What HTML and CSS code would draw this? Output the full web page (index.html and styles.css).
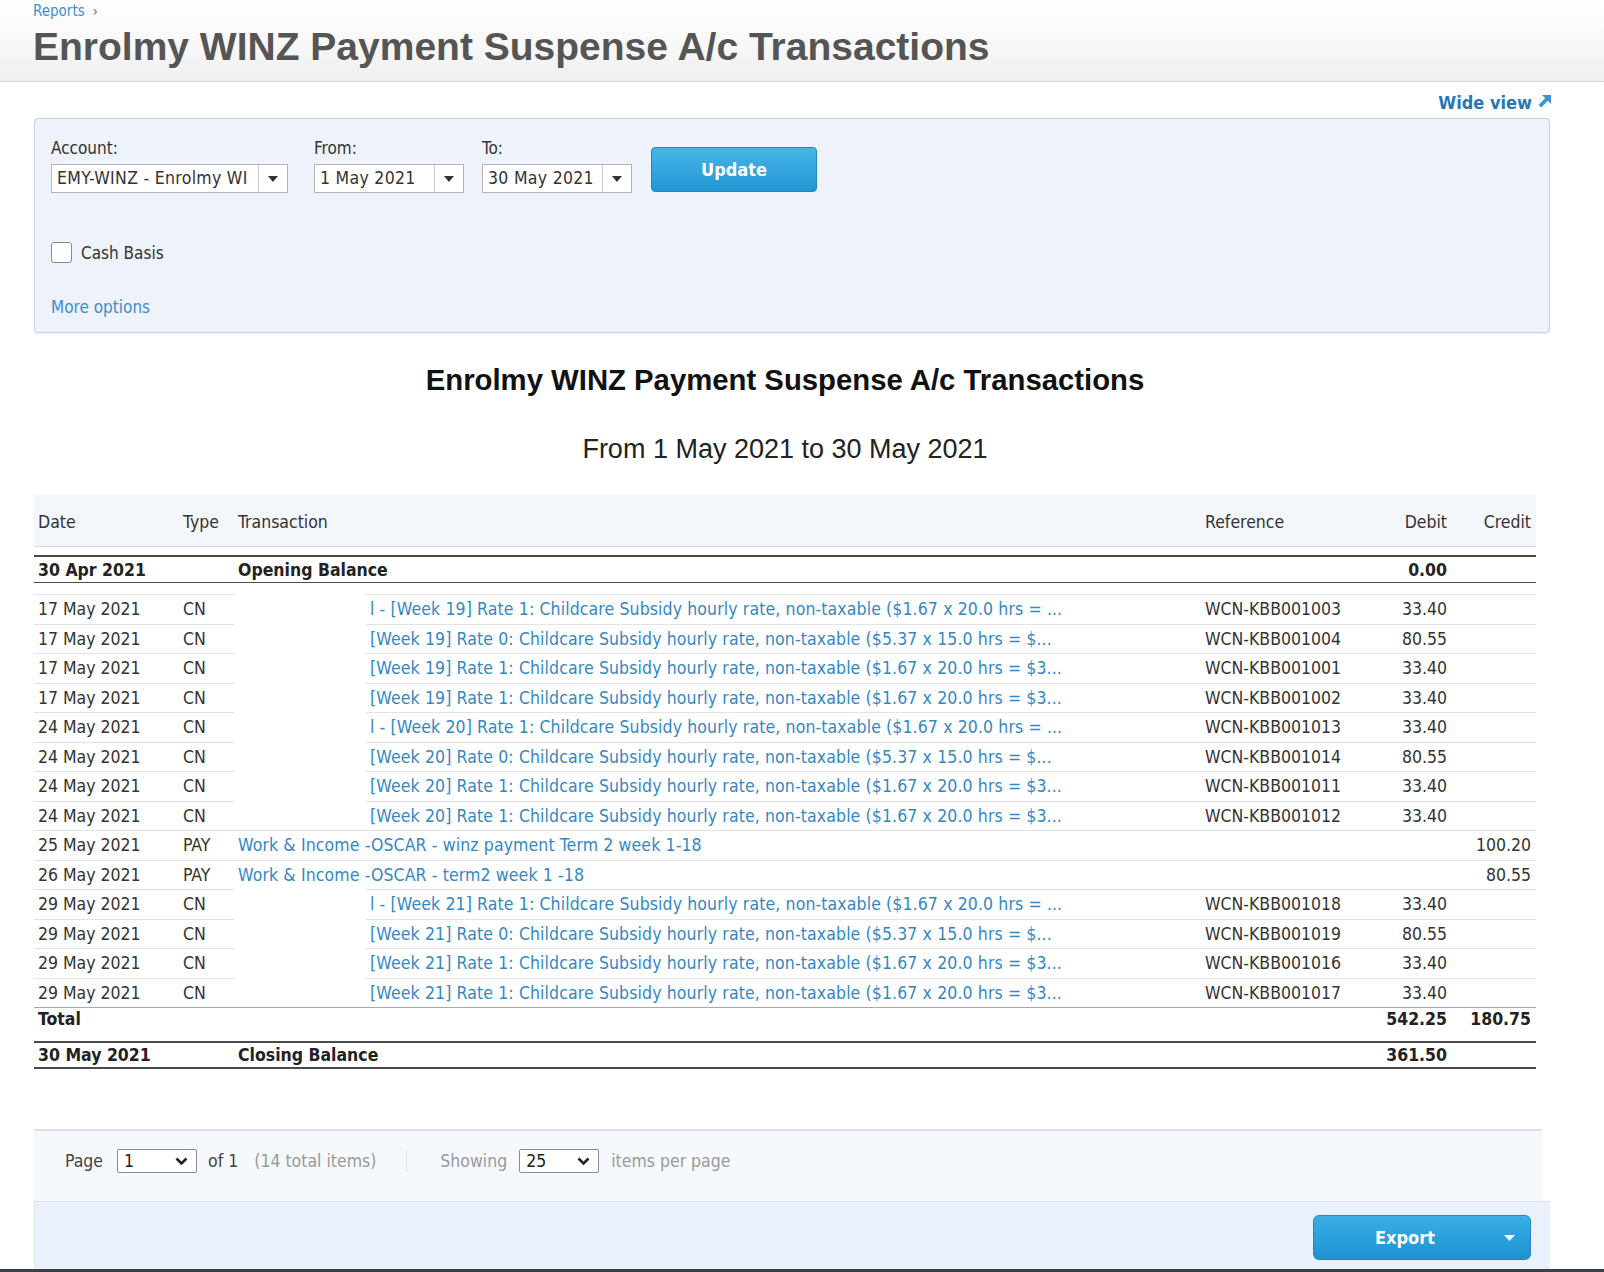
FILE: index.html
```html
<!DOCTYPE html>
<html lang="en">
<head>
    <meta charset="UTF-8">
    <title>Enrolmy WINZ Payment Suspense A/c Transactions</title>
    <link rel="stylesheet" href="styles.css">
</head>
<body>

<header class="page-head">
    <div class="crumbs"><a href="#">Reports</a><span class="crumb-sep">&rsaquo;</span></div>
    <h1 class="page-title">Enrolmy WINZ Payment Suspense A/c Transactions</h1>
</header>

<main class="content">
    <div class="wide-row">
        <a class="wide-link" href="#">Wide view
            <svg width="16" height="16" viewBox="0 0 16 16"><path d="M6 1h9v9l-3.2-3.2L5.2 13.4 2.6 10.8 9.2 4.2z" fill="#3f93d3"/></svg>
        </a>
    </div>

    <section class="filters">
        <div class="field-row">
            <div class="field field-account">
                <div class="field-label">Account:</div>
                <div class="combo">
                    <span class="combo-text">EMY-WINZ - Enrolmy WI</span>
                    <span class="combo-btn"><svg width="10" height="6" viewBox="0 0 10 6"><path d="M0 0h10L5 6z" fill="#333"/></svg></span>
                </div>
            </div>
            <div class="field field-from">
                <div class="field-label">From:</div>
                <div class="combo">
                    <span class="combo-text">1 May 2021</span>
                    <span class="combo-btn"><svg width="10" height="6" viewBox="0 0 10 6"><path d="M0 0h10L5 6z" fill="#333"/></svg></span>
                </div>
            </div>
            <div class="field field-to">
                <div class="field-label">To:</div>
                <div class="combo">
                    <span class="combo-text">30 May 2021</span>
                    <span class="combo-btn"><svg width="10" height="6" viewBox="0 0 10 6"><path d="M0 0h10L5 6z" fill="#333"/></svg></span>
                </div>
            </div>
            <button class="btn-update">Update</button>
        </div>
        <label class="check-row"><input type="checkbox"> Cash Basis</label>
        <a class="more-link" href="#">More options</a>
    </section>

    <h2 class="report-title">Enrolmy WINZ Payment Suspense A/c Transactions</h2>
    <p class="report-sub">From 1 May 2021 to 30 May 2021</p>

    <table class="ledger">
        <colgroup>
            <col style="width:145px">
            <col style="width:55px">
            <col style="width:132px">
            <col style="width:835px">
            <col style="width:169px">
            <col style="width:82px">
            <col style="width:84px">
        </colgroup>
        <thead>
            <tr>
                <th>Date</th>
                <th>Type</th>
                <th colspan="2">Transaction</th>
                <th>Reference</th>
                <th class="num">Debit</th>
                <th class="num">Credit</th>
            </tr>
        </thead>
        <tbody>
            <tr class="gap"><td colspan="7"></td></tr>
            <tr class="opening">
                <td>30 Apr 2021</td>
                <td></td>
                <td colspan="2">Opening Balance</td>
                <td></td>
                <td class="num">0.00</td>
                <td></td>
            </tr>
            <tr class="gap gap-lg"><td colspan="7"></td></tr>

            <tr class="row">
                <td>17 May 2021</td><td>CN</td><td class="mask"></td>
                <td><a href="#">l - [Week 19] Rate 1: Childcare Subsidy hourly rate, non-taxable ($1.67 x 20.0 hrs = ...</a></td>
                <td>WCN-KBB001003</td><td class="num">33.40</td><td></td>
            </tr>
            <tr class="row">
                <td>17 May 2021</td><td>CN</td><td class="mask"></td>
                <td><a href="#">[Week 19] Rate 0: Childcare Subsidy hourly rate, non-taxable ($5.37 x 15.0 hrs = $...</a></td>
                <td>WCN-KBB001004</td><td class="num">80.55</td><td></td>
            </tr>
            <tr class="row">
                <td>17 May 2021</td><td>CN</td><td class="mask"></td>
                <td><a href="#">[Week 19] Rate 1: Childcare Subsidy hourly rate, non-taxable ($1.67 x 20.0 hrs = $3...</a></td>
                <td>WCN-KBB001001</td><td class="num">33.40</td><td></td>
            </tr>
            <tr class="row">
                <td>17 May 2021</td><td>CN</td><td class="mask"></td>
                <td><a href="#">[Week 19] Rate 1: Childcare Subsidy hourly rate, non-taxable ($1.67 x 20.0 hrs = $3...</a></td>
                <td>WCN-KBB001002</td><td class="num">33.40</td><td></td>
            </tr>
            <tr class="row">
                <td>24 May 2021</td><td>CN</td><td class="mask"></td>
                <td><a href="#">l - [Week 20] Rate 1: Childcare Subsidy hourly rate, non-taxable ($1.67 x 20.0 hrs = ...</a></td>
                <td>WCN-KBB001013</td><td class="num">33.40</td><td></td>
            </tr>
            <tr class="row">
                <td>24 May 2021</td><td>CN</td><td class="mask"></td>
                <td><a href="#">[Week 20] Rate 0: Childcare Subsidy hourly rate, non-taxable ($5.37 x 15.0 hrs = $...</a></td>
                <td>WCN-KBB001014</td><td class="num">80.55</td><td></td>
            </tr>
            <tr class="row">
                <td>24 May 2021</td><td>CN</td><td class="mask"></td>
                <td><a href="#">[Week 20] Rate 1: Childcare Subsidy hourly rate, non-taxable ($1.67 x 20.0 hrs = $3...</a></td>
                <td>WCN-KBB001011</td><td class="num">33.40</td><td></td>
            </tr>
            <tr class="row">
                <td>24 May 2021</td><td>CN</td><td class="mask"></td>
                <td><a href="#">[Week 20] Rate 1: Childcare Subsidy hourly rate, non-taxable ($1.67 x 20.0 hrs = $3...</a></td>
                <td>WCN-KBB001012</td><td class="num">33.40</td><td></td>
            </tr>
            <tr class="row">
                <td>25 May 2021</td><td>PAY</td>
                <td colspan="2"><a href="#">Work &amp; Income -OSCAR - winz payment Term 2 week 1-18</a></td>
                <td></td><td></td><td class="num">100.20</td>
            </tr>
            <tr class="row">
                <td>26 May 2021</td><td>PAY</td>
                <td colspan="2"><a href="#">Work &amp; Income -OSCAR - term2 week 1 -18</a></td>
                <td></td><td></td><td class="num">80.55</td>
            </tr>
            <tr class="row">
                <td>29 May 2021</td><td>CN</td><td class="mask"></td>
                <td><a href="#">l - [Week 21] Rate 1: Childcare Subsidy hourly rate, non-taxable ($1.67 x 20.0 hrs = ...</a></td>
                <td>WCN-KBB001018</td><td class="num">33.40</td><td></td>
            </tr>
            <tr class="row">
                <td>29 May 2021</td><td>CN</td><td class="mask"></td>
                <td><a href="#">[Week 21] Rate 0: Childcare Subsidy hourly rate, non-taxable ($5.37 x 15.0 hrs = $...</a></td>
                <td>WCN-KBB001019</td><td class="num">80.55</td><td></td>
            </tr>
            <tr class="row">
                <td>29 May 2021</td><td>CN</td><td class="mask"></td>
                <td><a href="#">[Week 21] Rate 1: Childcare Subsidy hourly rate, non-taxable ($1.67 x 20.0 hrs = $3...</a></td>
                <td>WCN-KBB001016</td><td class="num">33.40</td><td></td>
            </tr>
            <tr class="row">
                <td>29 May 2021</td><td>CN</td><td class="mask"></td>
                <td><a href="#">[Week 21] Rate 1: Childcare Subsidy hourly rate, non-taxable ($1.67 x 20.0 hrs = $3...</a></td>
                <td>WCN-KBB001017</td><td class="num">33.40</td><td></td>
            </tr>

            <tr class="total">
                <td>Total</td><td></td><td colspan="2"></td><td></td>
                <td class="num">542.25</td><td class="num">180.75</td>
            </tr>
            <tr class="closing">
                <td>30 May 2021</td><td></td>
                <td colspan="2">Closing Balance</td>
                <td></td><td class="num">361.50</td><td></td>
            </tr>
        </tbody>
    </table>

    <div class="pager">
        <span>Page</span>
        <span class="pg-select pg-page"><span>1</span><svg width="13" height="9" viewBox="0 0 13 9"><path d="M1.5 1.5l5 5 5-5" fill="none" stroke="#222" stroke-width="2.6"/></svg></span>
        <span class="pg-of">of 1</span>
        <span class="muted pg-total">(14 total items)</span>
        <span class="pg-sep"></span>
        <span class="muted">Showing</span>
        <span class="pg-select pg-size"><span>25</span><svg width="13" height="9" viewBox="0 0 13 9"><path d="M1.5 1.5l5 5 5-5" fill="none" stroke="#222" stroke-width="2.6"/></svg></span>
        <span class="muted pg-per">items per page</span>
    </div>

    <div class="actions">
        <button class="btn-export">
            <span class="btn-label">Export</span>
            <span class="btn-caret"><svg width="11" height="6" viewBox="0 0 11 6"><path d="M0 0h11L5.5 6z" fill="#fff"/></svg></span>
        </button>
    </div>
</main>

<div class="taskbar"></div>

</body>
</html>
```

FILE: styles.css
```css
    body {
        margin: 0;
        height: 1272px;
        overflow: hidden;
        display: flex;
        flex-direction: column;
        background-color: #fff;
        color: #333;
        font-family: "DejaVu Sans Condensed", "DejaVu Sans", sans-serif;
        font-size: 17px;
    }
    a {
        color: #3388c3;
        text-decoration: none;
    }

    .page-head {
        flex: none;
        height: 81px;
        padding: 0 33px;
        border-bottom: 1px solid #dadada;
        background: linear-gradient(#ffffff 0%, #f8f8f8 55%, #eeeeee 100%);
    }
    .crumbs {
        padding-top: 2px;
        line-height: 18px;
        font-size: 15px;
    }
    .crumbs a {
        color: #3d8fcb;
    }
    .crumb-sep {
        margin-left: 8px;
        color: #666;
        font-size: 14px;
    }
    .page-title {
        margin: 5px 0 0 0;
        font: bold 39px/44px "Liberation Sans", Arial, sans-serif;
        color: #555;
    }

    .content {
        flex: 1;
        display: flex;
        flex-direction: column;
        width: 1516px;
        padding-left: 34px;
    }
    .wide-row {
        height: 32px;
        padding-top: 4px;
        margin-right: -2px;
        display: flex;
        justify-content: flex-end;
        align-items: center;
    }
    .wide-link {
        display: flex;
        align-items: center;
        gap: 4px;
        font-weight: bold;
        font-size: 18px;
        color: #2677b4;
    }

    .filters {
        height: 215px;
        box-sizing: border-box;
        padding: 19px 16px 15px 16px;
        border: 1px solid #c6d0dd;
        border-radius: 4px;
        background-color: #edf2fb;
        box-shadow: 0 1px 2px rgba(0, 0, 0, 0.08);
    }
    .field-row {
        display: flex;
        align-items: flex-end;
    }
    .field-label {
        line-height: 20px;
        margin-bottom: 6px;
    }
    .field-account {
        width: 237px;
        margin-right: 26px;
    }
    .field-from {
        width: 150px;
        margin-right: 18px;
    }
    .field-to {
        width: 150px;
    }
    .combo {
        display: flex;
        height: 29px;
        box-sizing: border-box;
        border: 1px solid #b3b3b3;
        background-color: #fff;
    }
    .combo-text {
        flex: 1;
        padding-left: 5px;
        line-height: 27px;
        font-size: 17.5px;
        letter-spacing: 0.3px;
        white-space: nowrap;
        overflow: hidden;
    }
    .combo-btn {
        width: 28px;
        border-left: 1px solid #cfcfcf;
        display: flex;
        align-items: center;
        justify-content: center;
    }
    .btn-update {
        width: 166px;
        height: 45px;
        margin: 0 0 1px 19px;
        border: 1px solid #2288c2;
        border-radius: 4px;
        background: linear-gradient(#48b5e7, #2196d3);
        color: #fff;
        font-family: inherit;
        font-size: 18px;
        font-weight: bold;
        cursor: pointer;
    }
    .check-row {
        display: flex;
        align-items: center;
        gap: 9px;
        height: 21px;
        margin-top: 49px;
    }
    .check-row input {
        -webkit-appearance: none;
        appearance: none;
        width: 21px;
        height: 21px;
        margin: 0;
        border: 1px solid #8a8a8a;
        border-radius: 3px;
        background-color: #fff;
    }
    .more-link {
        display: block;
        width: max-content;
        margin-top: 34px;
        line-height: 20px;
        color: #3d8fcb;
    }

    .report-title {
        width: 1502px;
        margin: 29px 0 0 0;
        text-align: center;
        font: bold 29.3px/36px "Liberation Sans", Arial, sans-serif;
        color: #111;
    }
    .report-sub {
        width: 1502px;
        margin: 35px 0 0 0;
        text-align: center;
        font: 27px/32px "Liberation Sans", Arial, sans-serif;
        color: #222;
    }

    .ledger {
        width: 1502px;
        margin-top: 30px;
        table-layout: fixed;
        border-collapse: separate;
        border-spacing: 0;
        font-size: 17.5px;
    }
    .ledger th,
    .ledger td {
        box-sizing: border-box;
        padding: 0 4px;
        text-align: left;
        font-weight: normal;
        white-space: nowrap;
        overflow: hidden;
    }
    .ledger a {
        letter-spacing: 0.12px;
    }
    .ledger .num {
        text-align: right;
        padding-right: 5px;
    }
    .ledger thead th {
        height: 52px;
        padding-top: 2px;
        background-color: #f3f6fb;
        border-bottom: 1px solid #d3d9e2;
    }
    .ledger .gap td {
        height: 8px;
        padding: 0;
        font-size: 0;
    }
    .ledger .gap-lg td {
        height: 11px;
    }
    .ledger .opening td {
        height: 28px;
        border-top: 2px solid #4a4a4a;
        border-bottom: 1px solid #4a4a4a;
        font-weight: bold;
        color: #222;
    }
    .ledger .row td {
        height: 29.5px;
        border-top: 1px solid #e3e3e3;
    }
    .ledger .row td.mask {
        border-top-color: #fff;
    }
    .ledger .total td {
        height: 34px;
        vertical-align: top;
        line-height: 22px;
        border-top: 1px solid #a8a8a8;
        font-weight: bold;
        color: #222;
    }
    .ledger .closing td {
        height: 28px;
        border-top: 2px solid #4a4a4a;
        border-bottom: 2px solid #4a4a4a;
        font-weight: bold;
        color: #222;
    }

    .pager {
        width: 1508px;
        height: 72px;
        box-sizing: border-box;
        margin-top: 60px;
        padding: 18px 0 0 31px;
        display: flex;
        align-items: flex-start;
        line-height: 24px;
        font-size: 17.5px;
        border-top: 2px solid #dde2ea;
        background-color: #f5f8fd;
        color: #444;
    }
    .pg-select {
        width: 80px;
        height: 24px;
        box-sizing: border-box;
        padding: 0 8px 0 6px;
        display: flex;
        align-items: center;
        justify-content: space-between;
        border: 1px solid #8c8c8c;
        border-radius: 2px;
        background-color: #fff;
        color: #222;
    }
    .pg-page {
        margin-left: 14px;
    }
    .pg-of {
        margin-left: 11px;
    }
    .pg-total {
        margin-left: 16px;
    }
    .pg-sep {
        width: 1px;
        height: 22px;
        margin: 1px 0 0 30px;
        background-color: #dde3ec;
    }
    .muted {
        color: #9a9a9a;
    }
    .pg-sep + .muted {
        margin-left: 33px;
    }
    .pg-size {
        margin-left: 12px;
    }
    .pg-per {
        margin-left: 12px;
    }

    .actions {
        flex: 1;
        width: 1516px;
        box-sizing: border-box;
        padding: 13px 19px 0 0;
        display: flex;
        justify-content: flex-end;
        align-items: flex-start;
        border-top: 1px solid #dce3ee;
        border-left: 1px solid #dfe5ef;
        background-color: #ebf1fc;
    }
    .btn-export {
        width: 218px;
        height: 45px;
        padding: 0;
        display: flex;
        align-items: center;
        border: 1px solid #2288c2;
        border-radius: 6px;
        background: linear-gradient(#3aaee4, #1d92d0);
        color: #fff;
        font-family: inherit;
        font-size: 18px;
        font-weight: bold;
        cursor: pointer;
    }
    .btn-label {
        flex: 1;
        text-align: center;
        padding-left: 8px;
    }
    .btn-caret {
        width: 42px;
        display: flex;
        justify-content: center;
    }

    .taskbar {
        flex: none;
        height: 3px;
        background-color: #3b3f48;
    }
```
